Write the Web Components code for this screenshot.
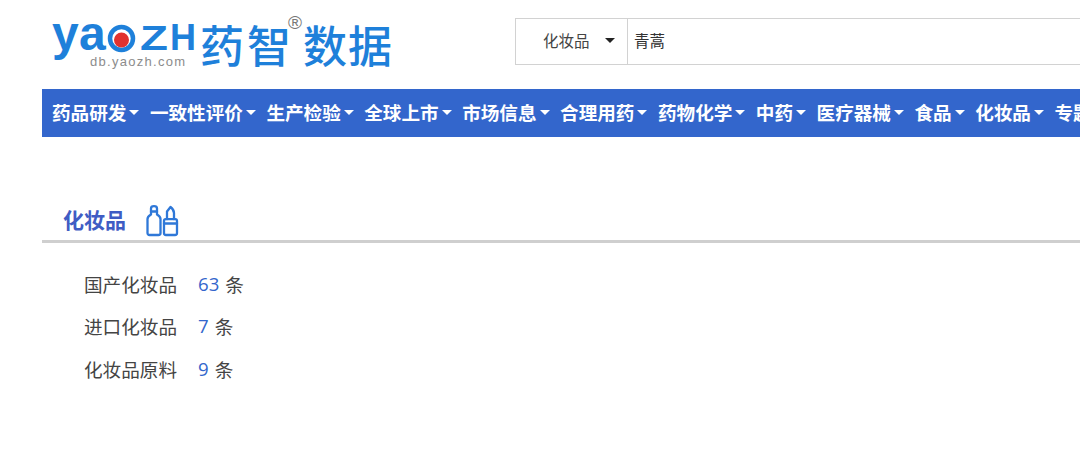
<!DOCTYPE html>
<html lang="zh">
<head>
<meta charset="utf-8">
<title>化妆品</title>
<style>
  html, body { margin: 0; padding: 0; background: #fff; overflow: hidden; }
  body { width: 1080px; height: 450px; font-family: "Noto Sans CJK SC", "Noto Sans", sans-serif; color: #444; }
</style>
</head>
<body>
<yz-header>
  <yz-logo></yz-logo>
  <yz-search category="化妆品" value="青蒿"></yz-search>
</yz-header>
<yz-nav>
  <yz-nav-item>药品研发</yz-nav-item>
  <yz-nav-item>一致性评价</yz-nav-item>
  <yz-nav-item>生产检验</yz-nav-item>
  <yz-nav-item>全球上市</yz-nav-item>
  <yz-nav-item>市场信息</yz-nav-item>
  <yz-nav-item>合理用药</yz-nav-item>
  <yz-nav-item>药物化学</yz-nav-item>
  <yz-nav-item>中药</yz-nav-item>
  <yz-nav-item>医疗器械</yz-nav-item>
  <yz-nav-item>食品</yz-nav-item>
  <yz-nav-item>化妆品</yz-nav-item>
  <yz-nav-item>专题</yz-nav-item>
</yz-nav>
<yz-section title="化妆品">
  <yz-row count="63">国产化妆品</yz-row>
  <yz-row count="7">进口化妆品</yz-row>
  <yz-row count="9">化妆品原料</yz-row>
</yz-section>

<script>
// helper so every element below is set up the same way
function makeShadow(el, html) {
  const shadowRoot = el.attachShadow({ mode: 'open' });
  shadowRoot.innerHTML = html;
  return shadowRoot;
}

customElements.define('yz-header', class extends HTMLElement {
  constructor() {
    super();
    makeShadow(this, `
      <style>
        :host { display: flex; height: 89px; align-items: flex-start; overflow: hidden; }
      </style>
      <slot></slot>`);
  }
});

// logo is an svg so the letters can sit where the artwork has them, still real text
customElements.define('yz-logo', class extends HTMLElement {
  constructor() {
    super();
    makeShadow(this, `
      <style>
        :host { display: block; width: 515px; height: 89px; flex: none; }
        svg { display: block; }
        .en { font-family: "Liberation Sans", sans-serif; font-weight: 700; fill: #1e80da; }
        .cn { font-family: "Noto Sans CJK SC", sans-serif; font-size: 44px; font-weight: 500; fill: #1e80da; }
        .dom { font-family: "Liberation Sans", sans-serif; font-size: 13px; fill: #8c8c8c; }
        .reg { font-family: "Liberation Sans", sans-serif; font-size: 19px; fill: #777; }
      </style>
      <svg width="515" height="89" viewBox="0 0 515 89">
        <text class="en" x="52" y="50" font-size="48">y</text>
        <text class="en" x="79" y="50" font-size="48">a</text>
        <circle cx="121.500" cy="38.500" r="11.500" fill="none" stroke="#1e80da" stroke-width="4.500"/>
        <circle cx="121.500" cy="40" r="7.500" fill="#e1322f"/>
        <text class="en" font-size="36" transform="translate(140 50) scale(1.27 1)">Z</text>
        <text class="en" x="170" y="50" font-size="36">H</text>
        <text class="cn" x="200 247 303 348" y="63">药智数据</text>
        <text class="dom" x="90" y="66" textLength="95" lengthAdjust="spacing">db.yaozh.com</text>
        <text class="reg" x="288" y="29">®</text>
      </svg>`);
  }
});

customElements.define('yz-search', class extends HTMLElement {
  constructor() {
    super();
    makeShadow(this, `
      <style>
        :host { display: flex; box-sizing: border-box; width: 565px; height: 47px; margin-top: 18px; border: 1px solid #d2d2d2; border-right: 0; flex: none; font-size: 15.500px; color: #444; }
        .cat { box-sizing: border-box; width: 112px; border-right: 1px solid #d2d2d2; display: flex; align-items: center; padding: 0 0 3px 27px; gap: 15px; }
        .caret { width: 0; height: 0; border: 5px solid transparent; border-top: 5px solid #222; border-bottom: 0; }
        .val { padding: 0 0 3px 6px; display: flex; align-items: center; color: #333; }
      </style>
      <div class="cat"><span>${this.getAttribute('category')}</span><span class="caret"></span></div>
      <div class="val">${this.getAttribute('value')}</div>`);
  }
});

customElements.define('yz-nav', class extends HTMLElement {
  constructor() {
    super();
    makeShadow(this, `
      <style>
        :host { display: flex; box-sizing: border-box; height: 48px; margin-left: 42px; width: 1038px; padding: 0 0 2px 10px; gap: 10.500px; background: #3366cc; align-items: center; white-space: nowrap; overflow: hidden; }
      </style>
      <slot></slot>`);
  }
});

customElements.define('yz-nav-item', class extends HTMLElement {
  constructor() {
    super();
    makeShadow(this, `
      <style>
        :host { display: flex; align-items: center; gap: 3px; flex: none; color: #fff; font-weight: 700; font-size: 18.600px; line-height: 46px; }
        .caret { width: 0; height: 0; border: 5px solid transparent; border-top: 5px solid #fff; border-bottom: 0; }
      </style>
      <slot></slot><span class="caret"></span>`);
  }
});

customElements.define('yz-section', class extends HTMLElement {
  constructor() {
    super();
    makeShadow(this, `
      <style>
        :host { display: block; margin: 68px 0 0 42px; }
        .head { display: flex; align-items: flex-start; box-sizing: border-box; height: 38px; padding-left: 21px; gap: 20px; border-bottom: 3px solid #cfcfcf; width: 1038px; }
        h2 { margin: 0; font-size: 21px; line-height: 28px; font-weight: 700; color: #3f5cc4; }
        svg { display: block; flex: none; }
        .rows { display: flex; flex-direction: column; padding: 19px 0 0 42px; }
      </style>
      <div class="head">
        <h2>${this.getAttribute('title')}</h2>
        <svg width="33" height="32" viewBox="0 0 33 32" fill="none" stroke="#2f78d8" stroke-width="2.300" stroke-linejoin="round" stroke-linecap="round">
          <path d="M1.500 14c0-2 1-3 3.500-4.500V6.500h6v3c2.500 1.500 3.500 2.500 3.500 4.500V28c0 1.200-.8 2-2 2h-9c-1.200 0-2-.8-2-2z"/>
          <path d="M5 6.500V3.500C5 2 6.200 1.200 8 1.200s3 .8 3 2.300v3"/>
          <path d="M18 16c0-1 .8-1.800 1.800-1.800h9.400c1 0 1.800.8 1.800 1.800V28c0 1.200-.8 2-2 2h-9c-1.200 0-2-.8-2-2z"/>
          <path d="M21 14.200V6.500L24.500 2c2 1.500 3.500 3.500 3.500 6v6.200"/>
          <path d="M18 18.500h13"/>
        </svg>
      </div>
      <div class="rows"><slot></slot></div>`);
  }
});

customElements.define('yz-row', class extends HTMLElement {
  constructor() {
    super();
    makeShadow(this, `
      <style>
        :host { display: flex; height: 42.500px; align-items: center; font-size: 18.600px; color: #444; }
        .label { width: 114px; flex: none; }
        .n { color: #3366cc; font-family: "Open Sans", sans-serif; margin-right: 6px; }
      </style>
      <span class="label"><slot></slot></span>
      <span class="n">${this.getAttribute('count')}</span><span>条</span>`);
  }
});
</script>
</body>
</html>
